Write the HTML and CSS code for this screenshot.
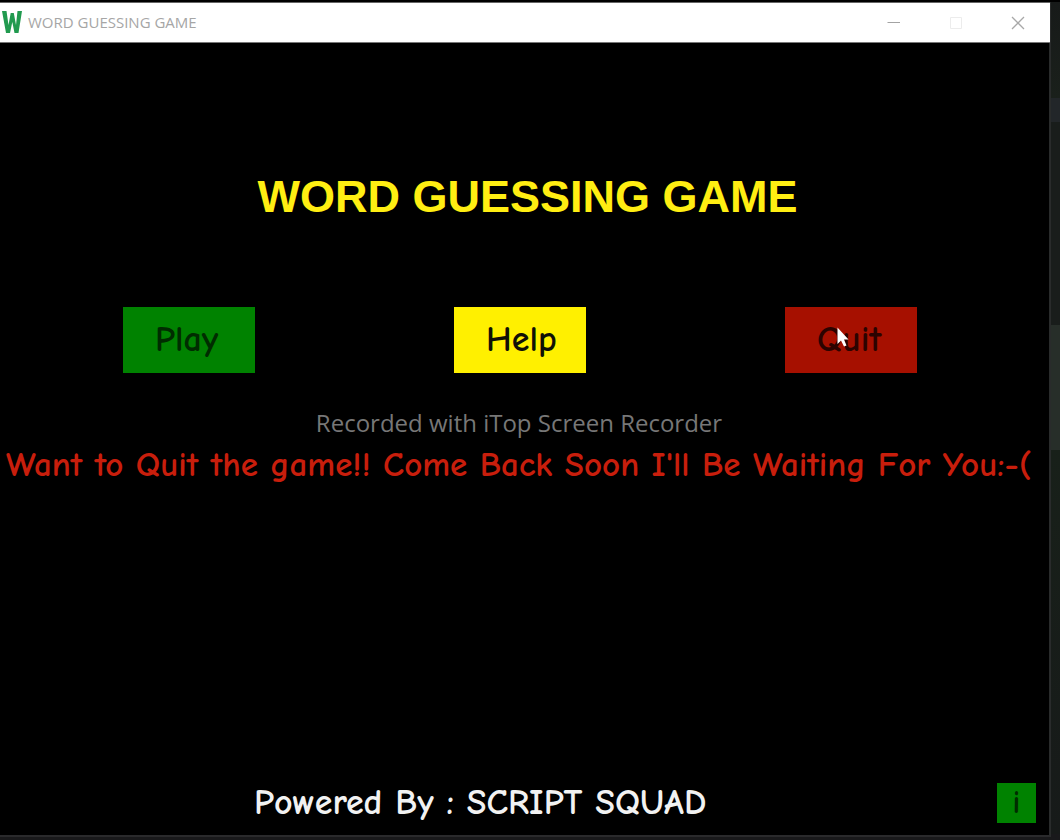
FILE: index.html
```html
<!DOCTYPE html>
<html lang="en">
<head>
<meta charset="utf-8">
<title>WORD GUESSING GAME</title>
<link rel="stylesheet" href="styles.css">
</head>
<body>
<div class="window">
  <header class="titlebar">
    <svg class="logo" viewBox="0 0 20 22" aria-hidden="true">
      <path d="M0 0H4.500L6.500 14L8.700 2H11.800L14 14L15.500 0H20L16.500 22H12.500L10.300 11L8 22H4Z" fill="#219a4f"/>
    </svg>
    <span class="caption">WORD GUESSING GAME</span>
    <div class="controls">
      <button class="control" aria-label="Minimize"><svg viewBox="0 0 14 14"><path d="M0.500 6.500H13" stroke="#a3a3a3"/></svg></button>
      <button class="control" aria-label="Maximize" disabled><svg viewBox="0 0 14 14"><path d="M1.500 1.500H12.500V12.500H1.500Z" stroke="#ececec"/></svg></button>
      <button class="control" aria-label="Close"><svg viewBox="0 0 14 14"><path d="M1 1L13 13M13 1L1 13" stroke="#a8a8a8" stroke-width="1.300"/></svg></button>
    </div>
  </header>
  <main class="game">
    <h1 class="title">WORD GUESSING GAME</h1>
    <nav class="menu">
      <button class="choice play">Play</button>
      <button class="choice help">Help</button>
      <button class="choice quit">Quit
        <svg class="pointer" viewBox="0 0 12 20" aria-hidden="true"><path d="M0.500 0.500V17L4 13.500L7 19.500L9.500 18.500L7 12.500H11.500Z" fill="#fff"/></svg>
      </button>
    </nav>
    <p class="watermark">Recorded with iTop Screen Recorder</p>
    <p class="message">Want to Quit the game!! Come Back Soon I'll Be Waiting For You:-(</p>
    <footer class="footer">
      <p class="credit">Powered By : SCRIPT SQUAD</p>
      <button class="info" aria-label="Information">i</button>
    </footer>
  </main>
</div>
</body>
</html>
```
FILE: styles.css
```css
* {
  box-sizing: border-box;
}

body {
  margin: 0;
  min-height: 100vh;
  display: flex;
  padding: 2px 9px 3px 0;
  font-family: "Comic Sans MS", "Comic Neue", "Open Sans", sans-serif;
  background: linear-gradient(#000 2px, #171a19 2px, #1a201b 98px, #222629 98px, #222629 122px, #191d1b 122px, #191d1b 325px, #272e29 325px, #272e29 450px, #182019 450px, #171a19 834px, #19191b 834px);
}

h1,
p {
  margin: 0;
  font-weight: 400;
}

button {
  border: 0;
  padding: 0;
  font-family: inherit;
}

.window {
  flex: 1;
  min-width: 0;
  display: flex;
  flex-direction: column;
  background: #000;
  border-right: 2px solid #292b2b;
  border-bottom: 2px solid #2a2a2c;
}

.titlebar {
  display: flex;
  align-items: center;
  height: 41px;
  margin-right: -1px;
  padding-right: 1px;
  background: #fff;
  border-top: 1px solid #666;
  border-bottom: 1px solid #777;
}

.logo {
  width: 20px;
  height: 22px;
  margin: 0 6px 2px 2px;
}

.caption {
  flex: 1;
  padding-bottom: 2px;
  font: 15px "Open Sans", sans-serif;
  color: #a6a6a6;
}

.controls {
  display: flex;
}

.control {
  width: 62px;
  height: 39px;
  background: none;
}

.control svg {
  display: block;
  width: 14px;
  height: 14px;
  margin: auto;
  fill: none;
}

.game {
  flex: 1;
  display: flex;
  flex-direction: column;
}

.title {
  margin: 128px 0 0 6px;
  font: bold 45px/52px "Liberation Sans", Arial, sans-serif;
  text-align: center;
  color: #ffee12;
}

.menu {
  display: flex;
  justify-content: space-between;
  margin-top: 84px;
  padding: 0 132px 0 123px;
}

.choice {
  position: relative;
  width: 132px;
  height: 66px;
  padding-left: 32px;
  text-align: left;
  font-size: 36px;
  font-weight: 700;
  line-height: 66px;
  color: #101006;
}

.play {
  background: #008200;
  color: #002c00;
}

.help {
  background: #fff000;
}

.quit {
  background: #a61000;
  color: #2c0300;
}

.pointer {
  position: absolute;
  left: 52px;
  top: 20px;
  width: 12px;
  height: 20px;
}

.watermark {
  margin-top: 34px;
  padding-right: 11px;
  font: 24px/32px "Open Sans", sans-serif;
  text-align: center;
  color: #777;
}

.message {
  padding-left: 6px;
  font-size: 35px;
  font-weight: 700;
  line-height: 52px;
  white-space: nowrap;
  color: #c81e0c;
}

.footer {
  display: flex;
  align-items: center;
  margin-top: auto;
  padding: 0 13px 8px 254px;
}

.credit {
  flex: 1;
  font-size: 36px;
  font-weight: 700;
  line-height: 48px;
  color: #f2f2f2;
}

.info {
  width: 39px;
  height: 40px;
  background: #008200;
  color: #002c00;
  font-size: 32px;
  font-weight: 700;
  line-height: 40px;
}
```
